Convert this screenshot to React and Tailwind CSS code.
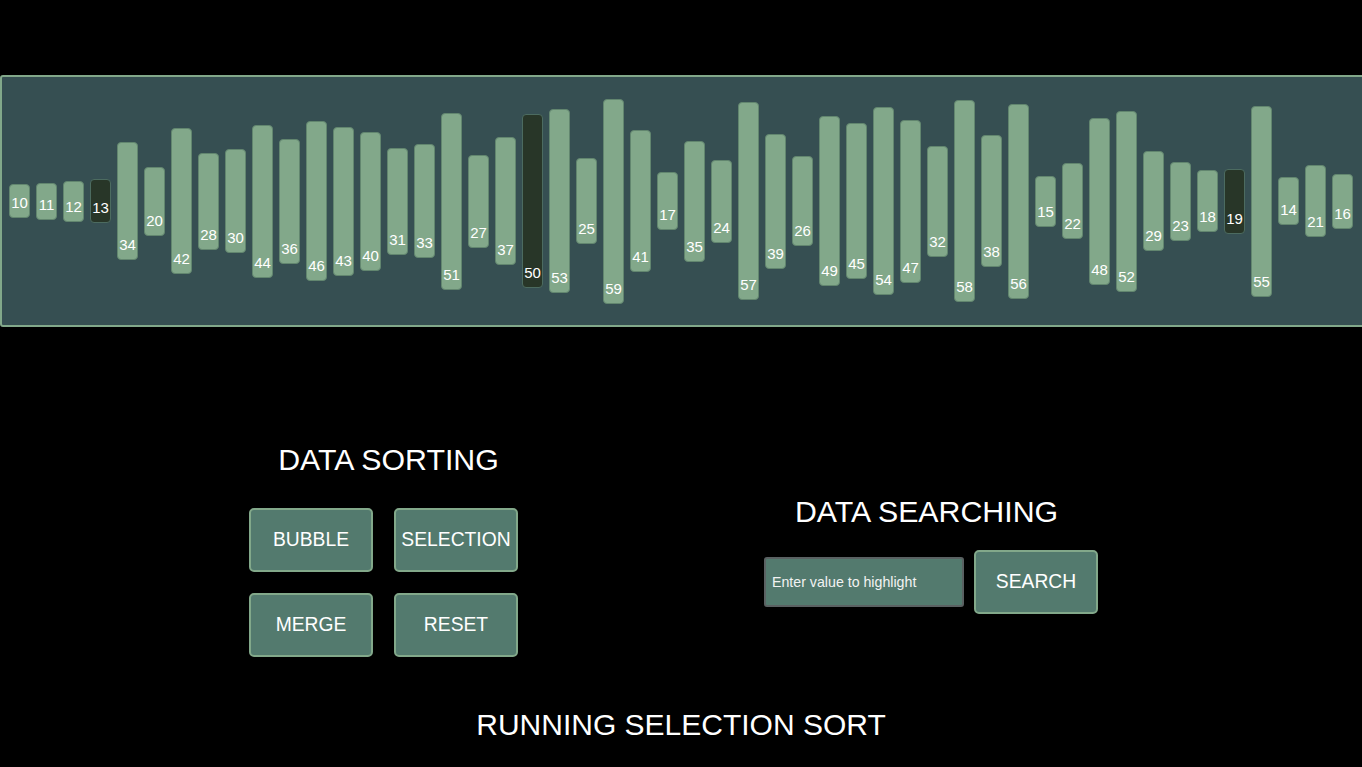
import React from "react";

const values = [10, 11, 12, 13, 34, 20, 42, 28, 30, 44, 36, 46, 43, 40, 31, 33, 51, 27, 37, 50, 53, 25, 59, 41, 17, 35, 24, 57, 39, 26, 49, 45, 54, 47, 32, 58, 38, 56, 15, 22, 48, 52, 29, 23, 18, 19, 55, 14, 21, 16];
const highlighted = new Set([13, 50, 19]);

const font = { fontFamily: '"Liberation Sans", Arial, sans-serif' };

function Bar({ v }) {
  const hi = highlighted.has(v);
  return (
    <div
      className={
        "w-[21px] shrink-0 rounded-[4px] border flex flex-col justify-end items-center pb-[6px] text-[15px] leading-[17px] text-white " +
        (hi ? "bg-[#283628] border-[#4c6b60]" : "bg-[#82a88a] border-[#62866f]")
      }
      style={{ height: Math.round(v * 3.5 - 1.5) }}
    >
      {v}
    </div>
  );
}

function Btn({ children }) {
  return (
    <button className="w-[124px] h-[64px] rounded-[5px] border-2 border-[#82a88a] bg-[#537a6e] text-white text-[19.3px] flex items-center justify-center">
      {children}
    </button>
  );
}

export default function App() {
  return (
    <div className="w-[1362px] h-[767px] bg-black overflow-hidden text-white" style={font}>
      <div className="h-[75px]" />
      <div className="h-[252px] w-[1370px] bg-[#364f52] border-2 border-[#82a88a] rounded-[3px] flex items-center pl-[7px] gap-[6px]">
        {values.map((v, i) => (
          <Bar key={i} v={v} />
        ))}
      </div>
      <div className="flex items-start">
        <div className="ml-[249px] mt-[116px] w-[269px] flex flex-col">
          <div className="text-[30.3px] leading-[33px] text-center pl-[10px] whitespace-nowrap">DATA SORTING</div>
          <div className="mt-[32px] grid grid-cols-[124px_124px] gap-x-[21px] gap-y-[21px]">
            <Btn>BUBBLE</Btn>
            <Btn>SELECTION</Btn>
            <Btn>MERGE</Btn>
            <Btn>RESET</Btn>
          </div>
        </div>
        <div className="ml-[246px] mt-[168px] w-[334px] flex flex-col">
          <div className="text-[30.3px] leading-[33px] text-center pr-[9px] whitespace-nowrap">DATA SEARCHING</div>
          <div className="mt-[22px] flex items-center gap-[10px]">
            <input
              className="w-[200px] h-[50px] rounded-[3px] border-2 border-[#5a6162] bg-[#537a6e] pl-[6px] text-[14.2px] text-white placeholder:text-[#f2f2f2] outline-none"
              placeholder="Enter value to highlight"
              style={font}
            />
            <Btn>SEARCH</Btn>
          </div>
        </div>
      </div>
      <div className="mt-[51px] text-[30px] leading-[33px] text-center">RUNNING SELECTION SORT</div>
    </div>
  );
}
